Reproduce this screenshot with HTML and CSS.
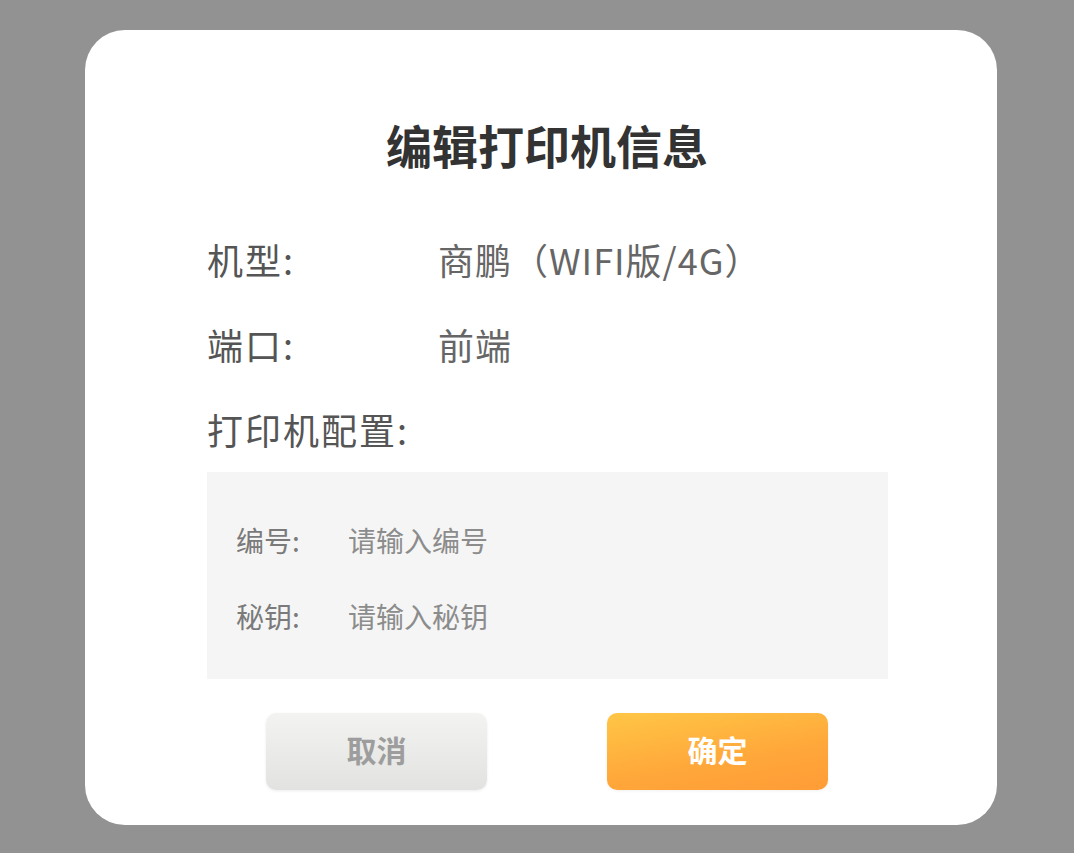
FILE: index.html
```html
<!DOCTYPE html>
<html lang="zh-CN">
<head>
<meta charset="utf-8">
<title>编辑打印机信息</title>
<link rel="stylesheet" href="styles.css">
</head>
<body>
<div class="modal">
  <h1 class="title">编辑打印机信息</h1>
  <div class="info">
    <div class="row"><span class="label">机型:</span><span class="value">商鹏（WIFI版/4G）</span></div>
    <div class="row"><span class="label">端口:</span><span class="value">前端</span></div>
    <div class="row"><span class="label">打印机配置:</span></div>
    <div class="config">
      <div class="field"><span class="flabel">编号:</span><span class="placeholder">请输入编号</span></div>
      <div class="field"><span class="flabel">秘钥:</span><span class="placeholder">请输入秘钥</span></div>
    </div>
  </div>
  <div class="actions">
    <button class="btn cancel">取消</button>
    <button class="btn confirm">确定</button>
  </div>
</div>
</body>
</html>
```

FILE: styles.css
```css
html, body {
  margin: 0;
  padding: 0;
}
body {
  background: #929292;
  height: 853px;
  overflow: hidden;
  font-family: "Noto Sans CJK SC", "Noto Sans", sans-serif;
}
.modal {
  margin: 30px 0 0 85px;
  width: 912px;
  height: 795px;
  box-sizing: border-box;
  background: #ffffff;
  border-radius: 40px;
  padding-top: 84px;
}
.title {
  margin: 0;
  padding-left: 12px;
  font-size: 46px;
  line-height: 60px;
  font-weight: 700;
  color: #333333;
  text-align: center;
}
.info {
  margin-top: 43px;
  padding-left: 122px;
}
.row {
  display: flex;
  height: 85px;
  line-height: 85px;
  font-size: 36px;
  letter-spacing: 2px;
}
.label {
  width: 231px;
  color: #555555;
}
.value {
  color: #666666;
  letter-spacing: 1px;
}
.config {
  width: 681px;
  height: 207px;
  box-sizing: border-box;
  background: #f5f5f5;
  padding-top: 30px;
}
.field {
  display: flex;
  height: 76px;
  line-height: 76px;
  font-size: 28px;
  padding-left: 29px;
}
.flabel {
  width: 112px;
  color: #7a7a7a;
}
.placeholder {
  color: #8c8c8c;
}
.actions {
  display: flex;
  gap: 120px;
  padding-left: 181px;
  margin-top: 34px;
}
.btn {
  width: 221px;
  height: 77px;
  border: none;
  border-radius: 10px;
  font-family: "Noto Sans CJK SC", "Noto Sans", sans-serif;
  font-size: 30px;
  font-weight: 700;
  padding: 0 0 6px 0;
}
.cancel {
  background: linear-gradient(180deg, #f3f3f2 0%, #e2e2e0 100%);
  color: #9d9d9d;
  box-shadow: 0 1px 3px rgba(0, 0, 0, 0.08);
}
.confirm {
  background: linear-gradient(170deg, #ffc646 0%, #ffa73a 60%, #ff9c36 100%);
  color: #ffffff;
  box-shadow: 0 1px 3px rgba(0, 0, 0, 0.06);
}
```
